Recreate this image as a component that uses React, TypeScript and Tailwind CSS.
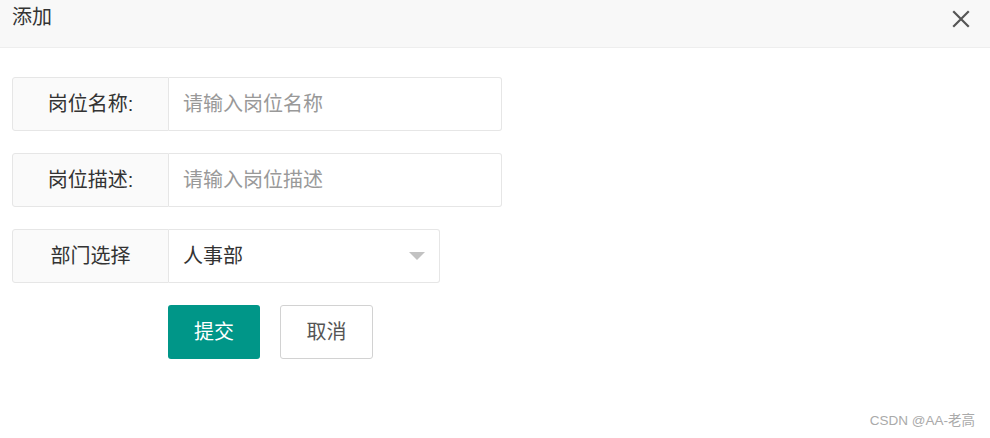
import React from "react";

function FieldRow({ label, children, wide = true }: { label: string; children: React.ReactNode; wide?: boolean }) {
  return (
    <div className={`flex h-[54px] ${wide ? "w-[490px]" : "w-[428px]"}`}>
      <div className="w-[157px] shrink-0 flex items-center justify-center border border-[#e6e6e6] bg-[#fafafa] rounded-l-[3px] text-[20px] text-[#333]">
        {label}
      </div>
      {children}
    </div>
  );
}

export default function App() {
  return (
    <div className="relative w-[990px] h-[438px] bg-white font-['Liberation_Sans','Noto_Sans_CJK_SC',sans-serif]">
      <header className="h-[48px] bg-[#f8f8f8] border-b border-[#eee] flex items-center justify-between pl-[12px] pr-[20px]">
        <span className="text-[20px] text-[#333] -mt-[14px]">添加</span>
        <svg width="18" height="18" viewBox="0 0 18 18" className="-mt-[10px]">
          <path d="M2 2 L16 16 M16 2 L2 16" stroke="#555" strokeWidth="2.2" strokeLinecap="square" />
        </svg>
      </header>

      <form className="pl-[12px] pt-[29px] flex flex-col gap-[22px]">
        <FieldRow label="岗位名称:">
          <input
            placeholder="请输入岗位名称"
            className="flex-1 border border-l-0 border-[#e6e6e6] rounded-r-[3px] pl-[14px] text-[20px] text-[#333] placeholder:text-[#999] outline-none"
          />
        </FieldRow>
        <FieldRow label="岗位描述:">
          <input
            placeholder="请输入岗位描述"
            className="flex-1 border border-l-0 border-[#e6e6e6] rounded-r-[3px] pl-[14px] text-[20px] text-[#333] placeholder:text-[#999] outline-none"
          />
        </FieldRow>
        <FieldRow label="部门选择" wide={false}>
          <div className="flex-1 flex items-center justify-between border border-l-0 border-[#e6e6e6] rounded-r-[3px] pl-[14px] pr-[14px] text-[20px] text-[#333]">
            <span>人事部</span>
            <svg width="16" height="8" viewBox="0 0 16 8">
              <path d="M0 0 L16 0 L8 8 Z" fill="#c2c2c2" />
            </svg>
          </div>
        </FieldRow>

        <div className="flex gap-[20px] pl-[156px]">
          <button type="button" className="w-[92px] h-[54px] bg-[#009688] text-white text-[20px] rounded-[3px]">
            提交
          </button>
          <button type="button" className="w-[93px] h-[54px] bg-white border border-[#d2d2d2] text-[#555] text-[20px] rounded-[3px]">
            取消
          </button>
        </div>
      </form>

      <div className="absolute right-[15px] bottom-[7px] text-[13.5px] text-[#aaa]">CSDN @AA-老高</div>
    </div>
  );
}
